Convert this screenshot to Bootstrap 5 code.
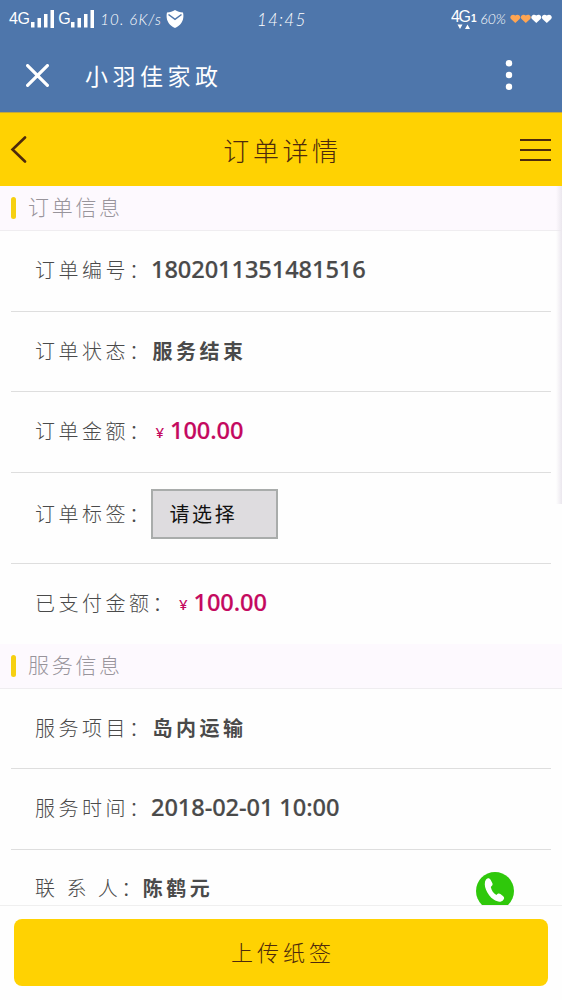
<!DOCTYPE html>
<html lang="zh-CN">
<head>
<meta charset="utf-8">
<meta name="viewport" content="width=device-width, initial-scale=1">
<title>小羽佳家政</title>
<link href="https://cdn.jsdelivr.net/npm/bootstrap@5.3.0/dist/css/bootstrap.min.css" rel="stylesheet">
<style>
  body { font-family: "Noto Sans", "Noto Sans CJK SC", sans-serif; color: #4a4a4a; background: #fefefe; }
  .screen { height: 1000px; }
  .cjk { font-family: "Noto Sans CJK SC", sans-serif; font-weight: 300; letter-spacing: 3.5px; white-space: nowrap; line-height: 1; }
  .top-area { background: #4e76ab; height: 112px; }
  .status-bar { height: 38px; line-height: 1; padding: 0 9px 0 9px; }
  .status-bar svg, .app-bar svg, .title-bar svg { display: block; flex: none; }
  .net { font: 16px/1 "Liberation Sans", sans-serif; letter-spacing: -.5px; }
  .hand { font: italic 300 15px/1 Lato, sans-serif; white-space: pre; }
  .w-speed { width: 66px; letter-spacing: 1.1px; margin-left: 6px; }
  .w-clock { left: 257px; top: 11px; font-size: 17px; letter-spacing: 1.2px; }
  .w-level { margin-left: 2px; font-size: 14px; }
  .app-bar { height: 74px; padding: 0 49px 0 26px; }
  .app-bar .cjk { font-size: 23px; letter-spacing: 4.5px; font-weight: 400; margin-left: 36px; }
  .title-bar { background: #ffd202; height: 74px; border-top: 1px solid #c3a83c; color: #4e2a0c; padding: 0 11px 0 10px; }
  .title-bar .cjk { font-size: 26px; letter-spacing: 3.6px; padding-left: 17px; }
  .sec { background: #fdf9fe; border-bottom: 1px solid #efedf0; height: 45px; padding: 0 0 1px 11px; color: #98949b; }
  .sec .cjk { font-size: 21px; letter-spacing: 2.7px; margin: -2px 0 0 12px; }
  .mark-bar { width: 5px; height: 22px; border-radius: 3px; background: #f6d012; }
  .line-item { margin: 0 11px; padding: 0 37px 2px 24px; border-bottom: 1px solid #dedede; font-size: 20px; flex: none; }
  .h80 { height: 80px; } .h81 { height: 81px; } .h91 { height: 91px; }
  .h-last { height: 78px; }
  .value { font-size: 20px; font-weight: 700; }
  .digits { font-family: "Noto Sans", sans-serif; font-size: 23.6px; font-weight: 500; -webkit-text-stroke: .2px currentColor; line-height: 1; white-space: nowrap; letter-spacing: -.08px; margin-left: -1.5px; }
  .price { color: #c4095f; }
  .yen { font-size: 15px; font-weight: 500; width: 19px; padding: 3px 0 0 3px; }
  .pick { width: 127px; height: 50px; border: 2px solid #a9acab; background: #dedcdf; color: #111; padding-left: 17px; margin: -7px 0 0 -2px; }
  .pick .cjk { font-weight: 400; font-size: 20px; letter-spacing: 2.6px; }
  .tag-label { margin-top: -7px; }
  .call-icon { margin-top: 6px; }
  .foot { height: 95px; border-top: 1px solid #efefef; background: #fefefe; padding: 13px 14px 14px; z-index: 2; bottom: 0; }
  .upload { background: #ffd202; border-radius: 8px; color: #4e2a0c; height: 67px; border: 0; }
  .upload .cjk { font-size: 22px; letter-spacing: 4px; margin: -3px 0 0 4px; }
  .edge { right: 0; top: 186px; width: 6px; height: 318px; background: linear-gradient(to right, rgba(240,236,242,0), #ebe7ee); }
</style>
</head>
<body>
<div class="screen position-relative overflow-hidden d-flex flex-column">
  <header class="top-area text-white flex-shrink-0">
    <div class="status-bar d-flex align-items-center position-relative">
      <span class="net">4G</span>
      <svg style="margin-left:2px" width="23" height="18" viewBox="0 0 23 18" fill="#fff"><path d="M0 12h3.500v5.500H0zM6.500 8h3.500v9.500H6.500zM13 4h3.500v13.500H13zM19.500 0H23v18h-3.500z"/></svg>
      <span class="net ms-1">G</span>
      <svg style="margin-left:1px" width="23" height="18" viewBox="0 0 23 18" fill="#fff"><path d="M0 12h3.500v5.500H0zM6.500 8h3.500v9.500H6.500zM13 4h3.500v13.500H13zM19.500 0H23v18h-3.500z"/></svg>
      <span class="hand w-speed">10. 6K/s</span>
      <svg width="18" height="18" viewBox="0 0 18 18"><path d="M9 0c2.500 1.500 5 2.200 8 2.500C18.500 9 16 15 9 18 2 15-.5 9 1 2.500 4 2.200 6.500 1.500 9 0z" fill="#fff"/><path d="M2.500 4.500L9 9.300l6.500-4.800" fill="none" stroke="#4e76ab" stroke-width="1.500"/></svg>
      <span class="hand w-clock position-absolute">14:45</span>
      <span class="ms-auto d-flex align-items-center">
        <svg width="27" height="24" viewBox="0 0 27 24" fill="#fff"><text x="0" y="15" font-family="Liberation Sans" font-size="16" textLength="20">4G</text><text x="20" y="15" font-family="Liberation Sans" font-size="10" font-weight="700">1</text><path d="M6.500 17.500h5l-2.500 4.500zM14 22h5l-2.500-4.500z"/></svg>
        <span class="hand w-level">60%</span>
        <svg class="ms-1" width="43" height="12" viewBox="0 0 43 12"><defs><path id="heart" d="M5.300 10L1 6C-1.300 3.500 2.500 0 5.300 2.600 8.100 0 11.900 3.500 9.600 6z"/></defs><use href="#heart" fill="#ffa552"/><use href="#heart" x="10.500" fill="#ffa552"/><use href="#heart" x="21" fill="#fff"/><use href="#heart" x="31.500" fill="#fff"/></svg>
      </span>
    </div>
    <div class="app-bar d-flex align-items-center">
      <svg width="23" height="23" viewBox="0 0 23 23" stroke="#fff" stroke-width="3.200" stroke-linecap="round"><path d="M1.600 1.600l19.800 19.800M21.400 1.600L1.600 21.400"/></svg>
      <span class="cjk">小羽佳家政</span>
      <svg class="ms-auto" width="8" height="32" viewBox="0 0 8 32" fill="#fff"><circle cx="4" cy="4.300" r="3.200"/><circle cx="4" cy="16" r="3.200"/><circle cx="4" cy="27.700" r="3.200"/></svg>
    </div>
  </header>

  <nav class="title-bar d-flex align-items-center justify-content-between flex-shrink-0">
    <svg width="18" height="28" viewBox="0 0 18 28" fill="none" stroke="#4e2a0c" stroke-width="2.600" stroke-linecap="round"><path d="M15 1.500L2.500 13.500 15 25.500"/></svg>
    <span class="cjk">订单详情</span>
    <svg width="31" height="24" viewBox="0 0 31 24" stroke="#4e2a0c" stroke-width="2.200"><path d="M0 2h31M0 12h31M0 22h31"/></svg>
  </nav>

  <main class="d-flex flex-column flex-shrink-0">
    <div class="sec d-flex align-items-center"><span class="mark-bar"></span><span class="cjk">订单信息</span></div>
    <div class="line-item h81 d-flex align-items-center"><span class="cjk">订单编号：</span><span class="digits">1802011351481516</span></div>
    <div class="line-item h80 d-flex align-items-center"><span class="cjk">订单状态：</span><span class="cjk value">服务结束</span></div>
    <div class="line-item h81 d-flex align-items-center"><span class="cjk">订单金额：</span><span class="yen price lh-1">¥</span><span class="digits price">100.00</span></div>
    <div class="line-item h91 d-flex align-items-center"><span class="cjk tag-label">订单标签：</span><div class="pick d-flex align-items-center"><span class="cjk">请选择</span></div></div>
    <div class="line-item h80 d-flex align-items-center border-0"><span class="cjk">已支付金额：</span><span class="yen price lh-1">¥</span><span class="digits price">100.00</span></div>
    <div class="sec d-flex align-items-center"><span class="mark-bar"></span><span class="cjk">服务信息</span></div>
    <div class="line-item h80 d-flex align-items-center"><span class="cjk">服务项目：</span><span class="cjk value">岛内运输</span></div>
    <div class="line-item h81 d-flex align-items-center"><span class="cjk">服务时间：</span><span class="digits">2018-02-01 10:00</span></div>
    <div class="line-item h-last d-flex align-items-center border-0">
      <span class="cjk">联 系 人：</span><span class="cjk value" style="margin-left:-2px">陈鹤元</span>
      <svg class="ms-auto call-icon" width="38" height="38" viewBox="0 0 38 38"><circle cx="19" cy="19" r="19" fill="#2fc80b"/><path d="M10 7.500c2-2 3.500-1.500 4.600.3l1.800 3.500c.7 1.600-.3 2.600-1.600 3.600.8 3.600 2.600 6.400 5.600 8 1.600-1.500 2.700-1.900 4-.9l2.800 2.200c1.500 1.400 1 2.600-.2 4.100-2 2.300-5.600 1.800-9.300-.7C11 23.200 6.500 12.500 10 7.500z" fill="#fff"/></svg>
    </div>
  </main>
  <footer class="foot position-absolute w-100">
    <button class="upload w-100 d-flex align-items-center justify-content-center" type="button"><span class="cjk">上传纸签</span></button>
  </footer>
  <div class="edge position-absolute"></div>
</div>
<script src="https://cdn.jsdelivr.net/npm/bootstrap@5.3.0/dist/js/bootstrap.bundle.min.js"></script>
</body>
</html>
